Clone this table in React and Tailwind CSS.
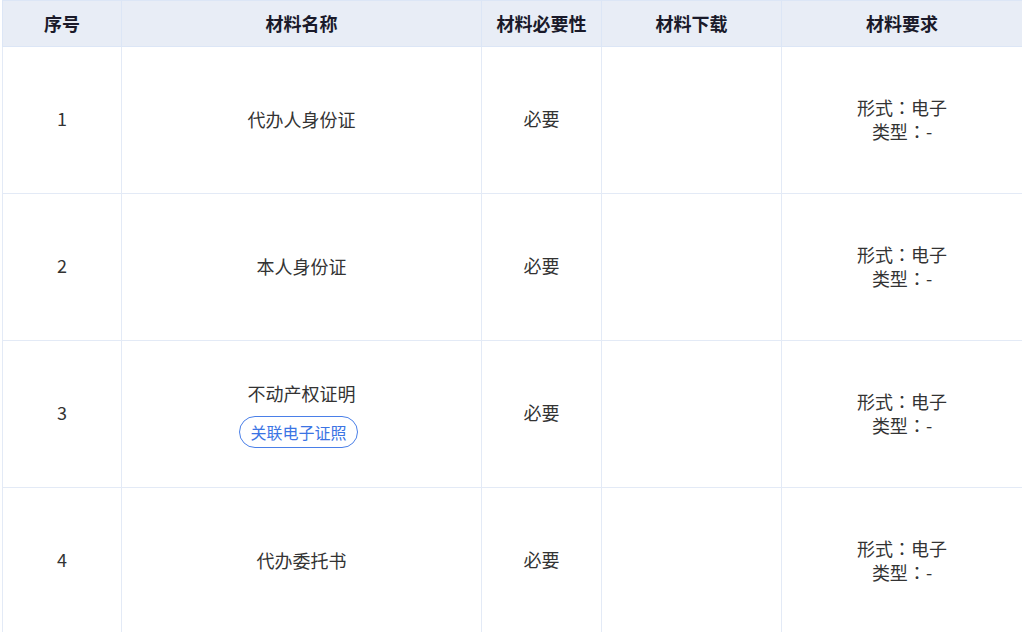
import React from "react";

const rows = [
  { no: 1, name: "代办人身份证" },
  { no: 2, name: "本人身份证" },
  { no: 3, name: "不动产权证明", tag: "关联电子证照" },
  { no: 4, name: "代办委托书" },
];

// 全角冒号居中显示
const Colon = () => (
  <span style={{ fontFamily: '"Noto Sans CJK JP", sans-serif' }}>：</span>
);

function App() {
  return (
    <div
      className="w-[1022px] h-[632px] overflow-hidden bg-white pl-[2px] text-[#333]"
      style={{ fontFamily: '"Noto Sans CJK SC", "Noto Sans", sans-serif' }}
    >
      <table className="w-[1020px] table-fixed border-collapse">
        <colgroup>
          <col className="w-[119px]" />
          <col className="w-[360px]" />
          <col className="w-[120px]" />
          <col className="w-[180px]" />
          <col className="w-[241px]" />
        </colgroup>
        <thead>
          <tr className="h-[46px] bg-[#e8edf6] text-[18px] font-bold text-[#1a1a2a]">
            <th className="border border-[#dce6f6]">序号</th>
            <th className="border border-[#dce6f6]">材料名称</th>
            <th className="border border-[#dce6f6]">材料必要性</th>
            <th className="border border-[#dce6f6]">材料下载</th>
            <th className="border border-[#dce6f6]">材料要求</th>
          </tr>
        </thead>
        <tbody className="text-[18px]">
          {rows.map((r) => (
            <tr key={r.no} className="h-[147px] text-center">
              <td className="border border-[#e3eaf6] pb-[3px]">{r.no}</td>
              <td className="border border-[#e3eaf6] pb-[3px]">
                <div className="flex flex-col items-center">
                  <span className="leading-6">{r.name}</span>
                  {r.tag && (
                    <span className="mt-[11px] -mb-[3px] -ml-[6px] rounded-full border border-[#4a7fe8] px-[10px] text-[16px] leading-[30px] text-[#3b74e4]">
                      {r.tag}
                    </span>
                  )}
                </div>
              </td>
              <td className="border border-[#e3eaf6] pb-[3px]">必要</td>
              <td className="border border-[#e3eaf6]"></td>
              <td className="border border-[#e3eaf6] pb-[3px] leading-6">
                <div>
                  形式<Colon />电子
                </div>
                <div>
                  类型<Colon />-
                </div>
              </td>
            </tr>
          ))}
        </tbody>
      </table>
    </div>
  );
}

export default App;
